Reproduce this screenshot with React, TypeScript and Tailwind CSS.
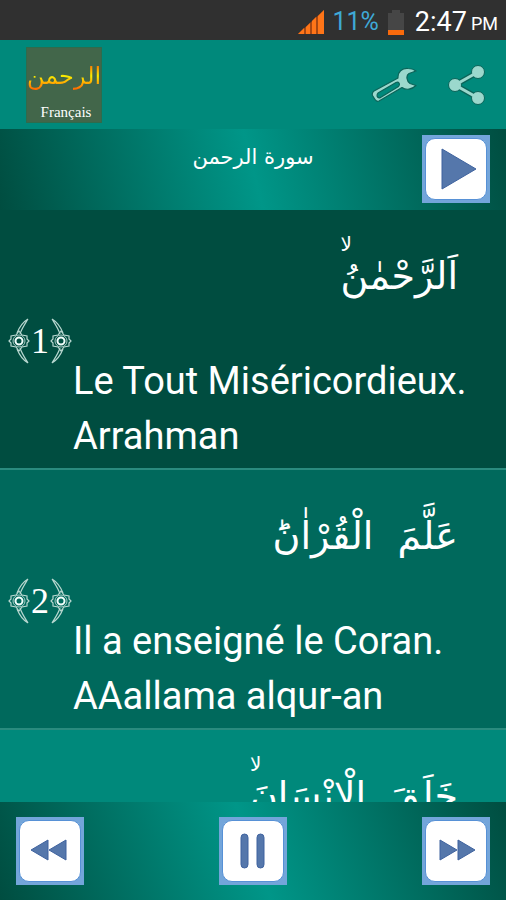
import type { ReactNode } from "react";

type Verse = { id: number; arabic: string; pause?: boolean; french?: string; latin?: string; bg: string };

const verses: Verse[] = [
  { id: 1, arabic: "اَلرَّحْمٰنُ", pause: true, french: "Le Tout Miséricordieux.", latin: "Arrahman", bg: "bg-[#004d40]" },
  { id: 2, arabic: "عَلَّمَ \u00a0الْقُرْاٰنَؕ", french: "Il a enseigné le Coran.", latin: "AAallama alqur-an", bg: "bg-[#00695c]" },
  { id: 3, arabic: "خَلَقَ \u00a0الْاِنْسَانَ", pause: true, bg: "bg-[#00897b]" },
];

function Ornament({ flip = false }: { flip?: boolean }) {
  return (
    <svg viewBox="0 0 22 46" className={`h-[46px] w-[22px] ${flip ? "-scale-x-100" : ""}`} fill="none" stroke="#b9d8d1" aria-hidden="true">
      <path d="M20 1C15 4 11 10 9 15M20 1C17 6 14 10 12 16M20 45C15 42 11 36 9 31M20 45C17 40 14 36 12 30" strokeWidth="1.2" />
      <path d="M11 13l3 4 5 1v3l2 2-2 2v3l-5 1-3 4-3-4-5-1v-3l-2-2 2-2v-3l5-1z" strokeWidth="1.2" />
      <circle cx="11" cy="23" r="6" strokeWidth="0.9" />
      <circle cx="11" cy="23" r="3.500" strokeWidth="2" stroke="#f2fffc" />
    </svg>
  );
}

function MediaButton({ label, children }: { label: string; children: ReactNode }) {
  return (
    <button type="button" aria-label={label} className="size-17 shrink-0 bg-[#73a5da] p-[3px]">
      <span className="flex size-full items-center justify-center rounded-[10px] border border-[#5791d6] bg-white">
        <svg viewBox="0 0 60 60" className="size-15 shrink-0" fill="#5577ab" stroke="#3f639f" strokeWidth="1" aria-hidden="true">
          {children}
        </svg>
      </span>
    </button>
  );
}

function StatusBar() {
  return (
    <div className="flex h-10 shrink-0 items-center justify-end bg-[#303030] px-2 pt-1 font-[Roboto,sans-serif]">
      <svg viewBox="0 0 26 24" className="mr-2 h-6 w-[26px]" aria-hidden="true">
        <path d="M0 24L26 0V24z" fill="#a84812" />
        <path d="M0 24l6-6v6zM8 17l4-4v11H8zM14 11l4-4v17h-4zM20 6l6-6v24h-6z" fill="#ff7518" />
      </svg>
      <span className="mr-2 text-[25px] text-[#3fa9d6]">11%</span>
      <svg viewBox="0 0 18 25" className="mr-2.5 h-[25px] w-[18px]" aria-hidden="true">
        <path d="M1 3h4V0h8v3h4v17H1z" fill="#464646" />
        <path d="M1 20h16v5H1z" fill="#f96a0c" />
      </svg>
      <span className="text-[27px] text-white">2:47</span>
      <span className="ml-1 pt-1 text-lg text-white">PM</span>
    </div>
  );
}

function Header() {
  return (
    <header className="flex h-[89px] shrink-0 items-center bg-[#00897b] pr-5 pl-[26px]">
      <div className="flex size-[76px] flex-col items-center justify-end border border-[#2f6b4c] bg-[#42664a]">
        <span dir="rtl" lang="ar" className="bg-linear-to-b from-[#ff7a00] from-30% via-[#f7ee00] via-50% to-[#ff6a00] to-75% bg-clip-text font-['DejaVu_Sans',sans-serif] text-2xl leading-[52px] text-transparent">الرحمن</span>
        <span className="pl-1 font-['Liberation_Serif',serif] text-[15px] leading-5 text-white">Français</span>
      </div>
      <button type="button" aria-label="Réglages" className="ml-auto">
        <svg viewBox="0 0 46 36" className="h-9 w-[46px]" fill="#9bd8cd" stroke="#0b6459" strokeWidth="1.2" strokeLinejoin="round" aria-hidden="true">
          <path fillRule="evenodd" d="M1.500 28.500Q.5 26 3 24L27 11C26.500 5 31 1 37 1.500Q42 1.500 45 4L38 6.500Q35.500 8 36 11.500Q36.500 15 39 16.500L45 18.500C41 22.500 35 23.500 31 20.500L8 34Q5.500 35 4 32.500ZM7 26Q5.500 28 6.500 30Q8 31.500 9.500 30.500L27.500 19.500Q29 17.500 28 16Q27 14.500 25 15.500Z" />
        </svg>
      </button>
      <button type="button" aria-label="Partager" className="ml-[31px]">
        <svg viewBox="0 0 38 40" className="h-10 w-[38px]" aria-hidden="true">
          <path d="M30 7L7 20l23 13" fill="none" stroke="#0b6459" strokeWidth="5.500" />
          <g fill="#9bd8cd" stroke="#0b6459">
            <circle cx="30" cy="7" r="6.500" /><circle cx="7" cy="20" r="6.500" /><circle cx="30" cy="33" r="6.500" />
          </g>
          <path d="M30 7L7 20l23 13" fill="none" stroke="#9bd8cd" strokeWidth="3" />
        </svg>
      </button>
    </header>
  );
}

function VerseRow({ verse }: { verse: Verse }) {
  return (
    <li className={`flex h-[260px] shrink-0 border-b-2 border-[#2a8b7e] ${verse.bg}`}>
      <div className="flex w-[73px] shrink-0 items-center justify-center pt-1 pr-[1px] pl-2 font-['Liberation_Serif',serif] text-4xl text-white">
        {verse.french && (
          <>
            <Ornament />
            <span className="w-5 text-center">{verse.id}</span>
            <Ornament flip />
          </>
        )}
      </div>
      <div className="min-w-0 grow font-[Roboto,sans-serif] text-[38px] leading-[55px] text-white">
        <p dir="rtl" lang="ar" className="h-36 pt-7 pr-12 font-['DejaVu_Sans',sans-serif] text-[38px] leading-[76px]">
          <span className="relative inline-block">
            {verse.arabic}
            {verse.pause && <span className="absolute -top-1.5 left-0 text-xl leading-6">ﻻ</span>}
          </span>
        </p>
        {verse.french && <p className="whitespace-nowrap">{verse.french}</p>}
        {verse.latin && <p className="whitespace-nowrap">{verse.latin}</p>}
      </div>
    </li>
  );
}

export default function App() {
  return (
    <div className="flex h-screen flex-col overflow-hidden bg-[#004d40]">
      <StatusBar />
      <Header />
      <section className="grid h-[81px] shrink-0 grid-cols-[68px_1fr_68px] bg-linear-[76deg] from-[#004d40] via-[#009688] to-[#004d40] px-4 pt-1.5">
        <h1 dir="rtl" lang="ar" className="col-start-2 pt-1 text-center font-['DejaVu_Sans',sans-serif] text-[21px] leading-9 text-white">سورة الرحمن</h1>
        <MediaButton label="Lire">
          <path d="M16 10L50 30L16 50z" />
        </MediaButton>
      </section>
      <ul className="flex min-h-0 grow flex-col overflow-hidden">
        {verses.map((v) => <VerseRow key={v.id} verse={v} />)}
      </ul>
      <footer className="flex h-[98px] shrink-0 items-center justify-between bg-linear-[70deg] from-[#004d40] via-[#009688] to-[#004d40] px-4">
        <MediaButton label="Précédent">
          <path d="M11 29L28 19v20zM29 29L46 19v20z" />
        </MediaButton>
        <MediaButton label="Pause">
          <rect x="18" y="13" width="7" height="34" rx="3.500" /><rect x="34" y="13" width="7" height="34" rx="3.500" />
        </MediaButton>
        <MediaButton label="Suivant">
          <path d="M14 19L31 29L14 39zM32 19L49 29L32 39z" />
        </MediaButton>
      </footer>
    </div>
  );
}
